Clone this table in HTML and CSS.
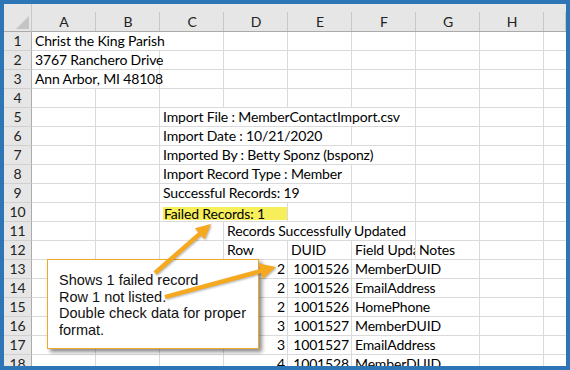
FILE: index.html
```html
<!DOCTYPE html>
<html lang="en">
<head>
  <meta charset="UTF-8" />
  <title>Member Contact Import</title>
  <link rel="stylesheet" href="styles.css">
</head>
<body>
  <div class="frame">
    <div class="sheet" id="sheet"></div>

    <div class="callout">
      Shows 1 failed record<br>
      Row 1 not listed.<br>
      Double check data for proper<br>
      format.
    </div>

    <svg class="arrows" viewBox="0 0 570 370">
      <polygon points="156.4,274.7 201.1,235.6 204.6,239.5 211,224 194.8,228.3 198.3,232.2 153.6,271.3" />
      <polygon points="165.6,299.1 261.2,273.3 262.7,278.9 276,267 258.5,263.5 260,269.1 164.4,294.9" />
    </svg>
  </div>

  <script>
    // --- DADOS DA PLANILHA ---
    // [coluna, quantas colunas ocupa, texto, classe]
    const cols = ['A', 'B', 'C', 'D', 'E', 'F', 'G', 'H', ''];
    const data = {
      1: [[1, 3, 'Christ the King Parish']],
      2: [[1, 2, '3767 Ranchero Drive']],
      3: [[1, 2, 'Ann Arbor, MI 48108']],
      5: [[3, 4, 'Import File : MemberContactImport.csv']],
      6: [[3, 3, 'Import Date : 10/21/2020']],
      7: [[3, 4, 'Imported By : Betty Sponz (bsponz)']],
      8: [[3, 3, 'Import Record Type : Member']],
      9: [[3, 3, 'Successful Records: 19']],
      10: [[3, 2, '<span class="hl">Failed Records: 1</span>']],
      11: [[4, 3, 'Records Successfully Updated']],
      12: [[4, 1, 'Row'], [5, 1, 'DUID'], [6, 1, 'Field Update', 'clip'], [7, 1, 'Notes']],
      13: [[4, 1, '2', 'num'], [5, 1, '1001526', 'num'], [6, 2, 'MemberDUID']],
      14: [[4, 1, '2', 'num'], [5, 1, '1001526', 'num'], [6, 2, 'EmailAddress']],
      15: [[4, 1, '2', 'num'], [5, 1, '1001526', 'num'], [6, 2, 'HomePhone']],
      16: [[4, 1, '3', 'num'], [5, 1, '1001527', 'num'], [6, 2, 'MemberDUID']],
      17: [[4, 1, '3', 'num'], [5, 1, '1001527', 'num'], [6, 2, 'EmailAddress']],
      18: [[4, 1, '4', 'num'], [5, 1, '1001528', 'num'], [6, 2, 'MemberDUID']]
    };

    const sheet = document.getElementById('sheet');
    let html = '<div class="corner"><svg width="13" height="13" viewBox="0 0 13 13"><polygon points="13,0 13,13 0,13" /></svg></div>';
    cols.forEach(c => { html += `<div class="col-head">${c}</div>`; });

    for (let r = 1; r <= 18; r++) {
      html += `<div class="row-head">${r}</div>`;
      const cells = data[r] || [];
      let c = 1;
      while (c <= cols.length) {
        const cell = cells.find(x => x[0] === c);
        const last = c === cols.length ? ' last' : '';
        if (cell) {
          html += `<div class="cell span-${cell[1]} ${cell[3] || ''}${last}">${cell[2]}</div>`;
          c += cell[1];
        } else {
          html += `<div class="cell${last}"></div>`;
          c++;
        }
      }
    }
    sheet.innerHTML = html;
  </script>
</body>
</html>
```

FILE: styles.css
```css
/* Geral */
body { margin: 0; }
.frame {
  position: relative; width: 570px; height: 370px; box-sizing: border-box;
  padding: 4px; background-color: #2e75b6;
}

/* Planilha */
.sheet {
  height: 100%; overflow: hidden; background-color: white;
  display: grid; grid-template-columns: 28px repeat(8, 64px) 1fr; grid-template-rows: 28px repeat(18, 19px);
  font-family: 'Lato', 'Liberation Sans', sans-serif; font-size: 14px; letter-spacing: -0.15px; color: #000;
}
.corner {
  background-color: #e6e6e6; border-right: 1px solid #c8c8c8; border-bottom: 1px solid #ababab;
  display: flex; align-items: flex-end; justify-content: flex-end; padding: 0 2px 2px 0;
}
.corner polygon { fill: #c4c4c4; }
.col-head {
  background: linear-gradient(#c8c8c8, #c8c8c8) right bottom / 1px 19px no-repeat, #e6e6e6;
  border-bottom: 1px solid #ababab; text-align: center; padding-top: 8px; line-height: 19px; color: #222;
}
.row-head {
  background-color: #e6e6e6; border-right: 1px solid #ababab; border-bottom: 1px solid #d0d0d0;
  text-align: center; line-height: 18px; color: #222;
}
.cell {
  border-right: 1px solid #dadada; border-bottom: 1px solid #dadada;
  padding: 0 3px; line-height: 18px; white-space: nowrap;
}
.cell.last { border-right: none; }
.cell.clip { overflow: hidden; padding-right: 0; }
.cell.num { text-align: right; padding-right: 2px; }
.span-2 { grid-column: span 2; }
.span-3 { grid-column: span 3; }
.span-4 { grid-column: span 4; }
.hl {
  display: inline-block; width: 123px; padding-left: 1px; margin-top: 4px;
  line-height: 13px; background-color: #f7ef5a;
}

/* Anotações */
.callout {
  position: absolute; left: 47px; top: 259px; width: 212px; height: 90px; box-sizing: border-box;
  border: 1px solid #f2a62a; background-color: white; box-shadow: 3px 3px 4px rgba(0,0,0,0.45);
  padding: 12px 0 0 11px;
  font-family: 'Liberation Sans', Arial, sans-serif; font-size: 14.5px; line-height: 16.7px; color: #111;
}
.arrows {
  position: absolute; left: 0; top: 0; width: 570px; height: 370px;
  filter: drop-shadow(1px 1px 1px rgba(0,0,0,0.3));
}
.arrows polygon { fill: #f6a81f; }
```
